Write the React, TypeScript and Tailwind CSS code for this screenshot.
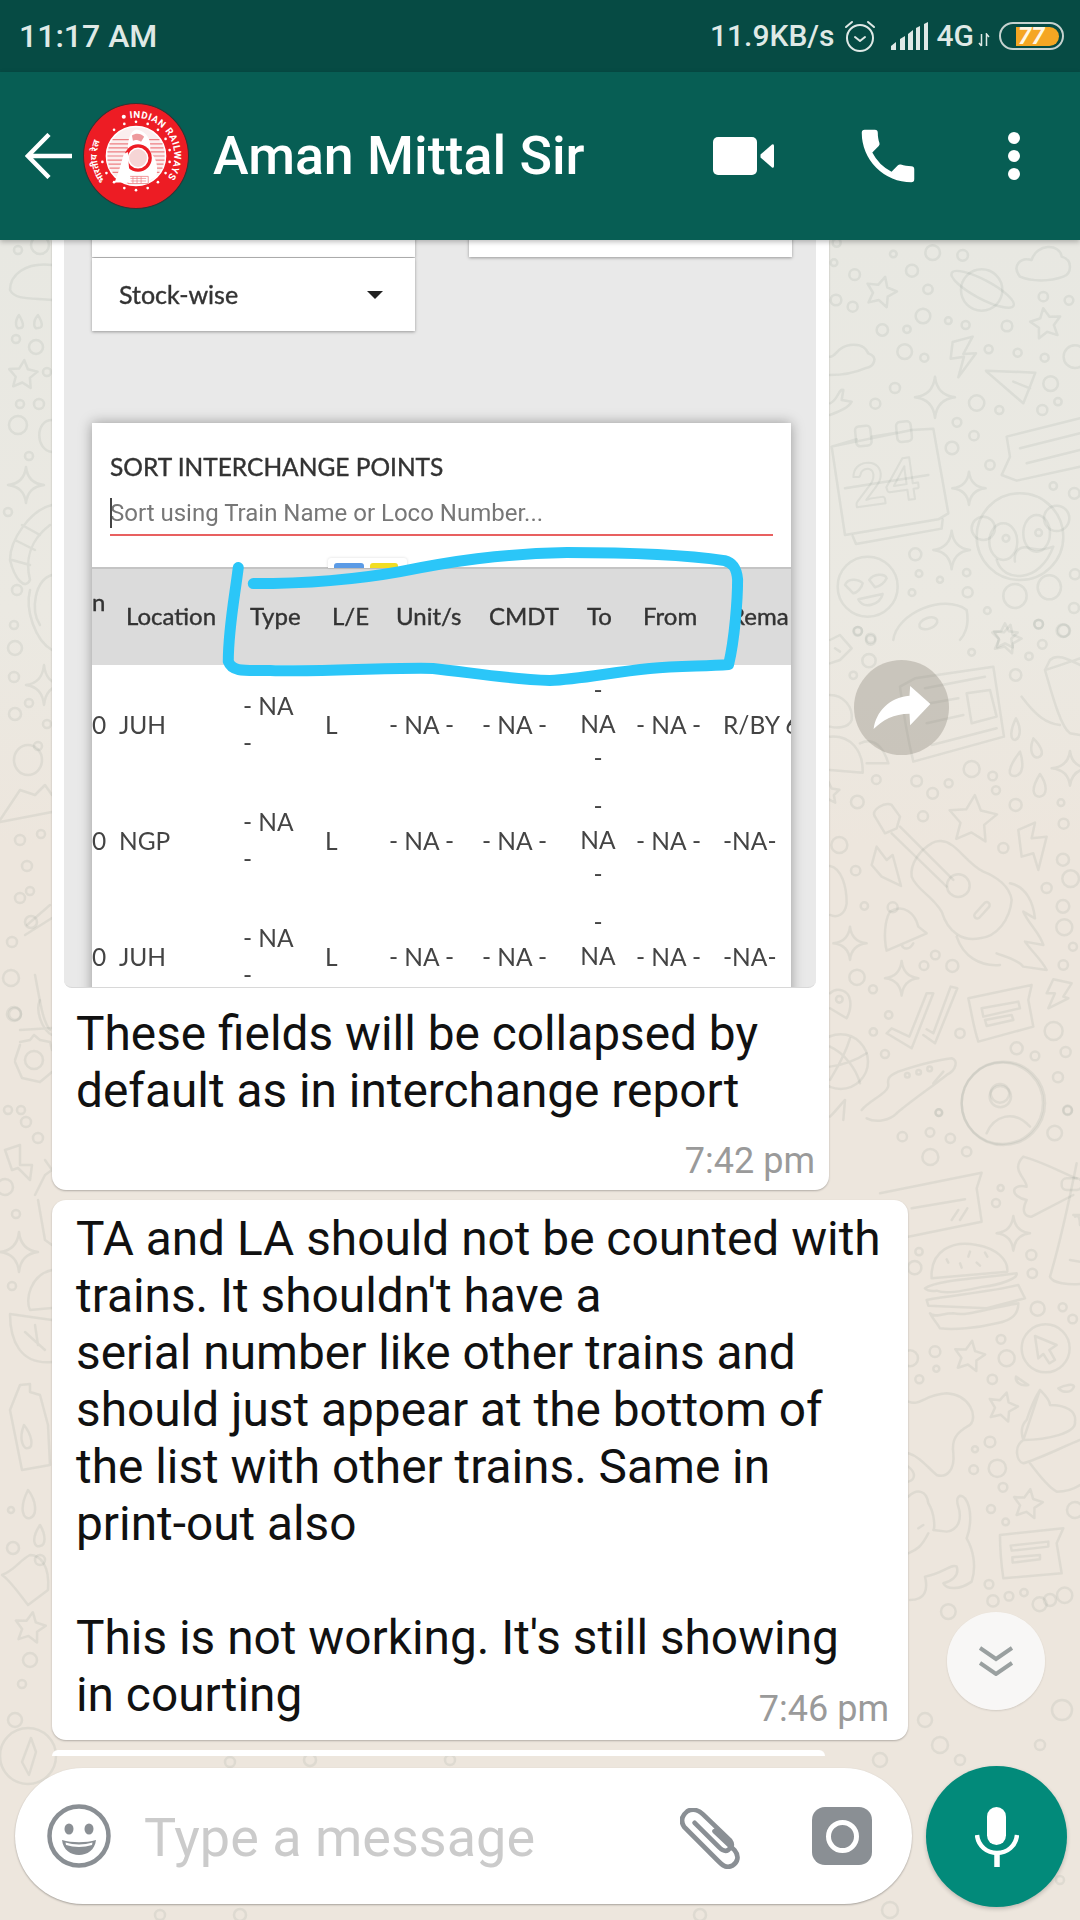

import React from "react";

const star = (cx: number, cy: number, R: number, rot = 0) => {
  const p: string[] = [];
  for (let i = 0; i < 10; i++) {
    const r = i % 2 ? R * 0.5 : R;
    const a = ((-90 + rot + i * 36) * Math.PI) / 180;
    p.push(`${(cx + r * Math.cos(a)).toFixed(1)},${(cy + r * Math.sin(a)).toFixed(1)}`);
  }
  return p.join(" ");
};
const sparkle = (x: number, y: number, a: number, b: number) =>
  `M${x} ${y - b}Q${x + a * 0.1} ${y - b * 0.1} ${x + a} ${y}Q${x + a * 0.1} ${y + b * 0.1} ${x} ${y + b}Q${x - a * 0.1} ${y + b * 0.1} ${x - a} ${y}Q${x - a * 0.1} ${y - b * 0.1} ${x} ${y - b}Z`;

const Dots = ({ d }: { d: number[][] }) => (
  <>
    {d.map(([x, y, r], i) => (
      <circle key={i} cx={x} cy={y} r={r} />
    ))}
  </>
);

const z8 = [[110,8,12],[280,42,10],[398,38,22],[488,46,16],[102,68,10],[164,104,16],[336,92,18],[384,148,14],[108,180,16],[158,200,15],[730,170,14],[807,181,13],[369,228,22],[445,242,10],[497,255,12],[621,258,16],[247,270,17],[321,268,11],[314,335,22],[373,353,12],[566,328,12],[653,338,12],[734,353,12],[825,350,34],[285,444,15],[226,491,15],[530,489,23],[598,510,12],[752,431,22],[774,485,11],[727,510,15],[471,547,13],[522,587,14],[456,624,19],[570,675,14],[760,738,11],[823,760,16],[346,943,18],[357,1001,10],[420,1019,9],[500,998,11],[336,1058,10],[503,1057,15],[562,1112,10],[822,1104,15],[716,1153,13],[789,1172,19],[173,1174,13],[212,1195,14],[825,1003,15]];
const z9 = [[114,33,12],[152,60,14],[147,122,20],[100,166,11],[455,97,10],[732,32,18],[656,12,13],[667,73,13],[627,109,11],[587,165,17],[455,447,24],[518,468,13],[386,490,12],[528,511,12],[290,483,16],[338,520,16],[169,479,13],[112,546,19],[309,589,15],[587,555,18],[723,548,10],[731,611,15],[550,684,15],[729,719,18],[752,776,25],[680,804,15],[729,859,19],[733,922,24],[759,980,12],[730,1035,14],[58,675,24],[107,752,14],[133,858,11],[111,1072,23],[159,1108,12],[312,1037,13],[346,1005,13],[397,1038,18],[206,1185,11],[160,1236,11],[195,1302,12],[420,1240,14],[701,1233,27],[590,1285,18],[645,1308,13],[737,1296,15],[714,1372,15],[356,1478,10],[743,1470,13]];
const z10 = [[177,38,10],[563,32,13],[67,110,14],[150,97,13],[211,115,14],[260,155,14],[151,171,24],[524,99,22],[362,264,9],[348,309,12],[454,465,15],[457,520,14],[117,455,11],[104,503,20],[473,626,21],[548,622,12],[578,657,13],[363,718,13],[380,775,24],[165,755,16],[169,806,9],[118,838,12],[337,838,14],[330,1026,16],[285,1048,9],[281,1109,13],[352,1105,26],[369,1162,13],[333,1227,12],[377,1266,10],[585,1230,24],[327,1453,13],[339,1503,17],[387,1489,13],[432,1478,11],[479,1513,21],[554,1486,23],[205,1535,22],[90,775,24]];
const left = [[18,250,4],[40,245,9],[16,339,4],[36,347,7],[47,372,4],[20,404,4],[39,404,5],[18,425,9],[29,456,4],[8,512,4],[17,590,5],[14,625,4],[15,648,7],[14,677,5],[29,703,4],[15,714,6],[38,746,4],[47,724,4],[20,840,5],[41,834,4],[27,866,5],[30,891,4],[20,898,5],[31,922,6],[12,942,5],[11,978,8],[14,1014,7],[15,1014,6],[21,1110,4],[26,1122,5],[8,1110,4],[38,1138,5],[5,1187,8],[16,1214,4],[12,1286,4],[11,1510,3],[13,1548,6],[30,1660,7],[22,1684,4]];
const bottom = [[700,1915,6],[880,1760,7],[940,1745,8],[960,1760,5],[890,1910,8],[1060,1880,4],[1050,1600,6],[1040,1745,5],[925,1720,7],[1062,1710,10],[160,1915,5],[240,1915,6],[310,1760,6],[230,1762,5],[450,1760,5]];

function Wallpaper() {
  return (
    <svg className="absolute inset-0 h-full w-full" viewBox="0 240 1080 1680" fill="none" stroke="#66776f" strokeOpacity="0.1" strokeWidth="2.5" strokeLinejoin="round" strokeLinecap="round">
      <g transform="translate(800 240) scale(.3333)" strokeWidth="7.5">
        <Dots d={z8} />
        <polygon points={star(243, 157, 48, 15)} />
        <polygon points={star(738, 252, 48, -10)} />
        <polygon points={star(615, 1190, 40, 0)} />
        <path d={sparkle(405, 472, 60, 62)} />
        <path d={sparkle(507, 745, 50, 50)} />
        <path d={sparkle(455, 930, 55, 58)} />
        <circle cx="545" cy="150" r="62" />
        <ellipse cx="548" cy="148" rx="105" ry="28" transform="rotate(28 548 148)" />
        <path d="M660 110C635 80 660 50 695 60C710 10 780 10 785 50C820 60 815 100 790 110C750 125 695 125 660 110Z" />
        <path d="M90 350C110 350 110 320 150 315C190 310 200 330 205 340C235 350 225 380 195 385C160 400 120 405 90 405" />
        <path d="M90 490C115 480 115 445 130 450L125 480L155 485C145 505 115 515 90 525" />
        <path d="M518 290L458 306L452 356L492 350L475 412L528 340L490 342Z" />
        <path d="M558 392L706 398L688 445L670 490L560 395M640 425L690 445" />
        <path d="M95 620L170 598M215 590L290 578M335 570L400 566L445 820L415 838L135 885L95 620ZM135 745L385 705" />
        <rect x="167" y="558" width="46" height="60" rx="12" transform="rotate(-6 190 588)" />
        <rect x="290" y="545" width="44" height="60" rx="12" transform="rotate(-6 312 575)" />
        <path d="M158 888L168 912L425 866L428 838" />
        <text x="155" y="790" fontFamily="Lato, sans-serif" fontSize="175" fontWeight="700" strokeWidth="6" transform="rotate(-8 250 730)">24</text>
        <path d="M840 535L620 590L630 650L605 705L650 722L840 680M660 625L840 580M680 670L840 630" />
        <circle cx="660" cy="890" r="130" />
        <circle cx="550" cy="865" r="35" />
        <circle cx="770" cy="835" r="38" />
        <ellipse cx="610" cy="905" rx="42" ry="55" />
        <ellipse cx="710" cy="880" rx="40" ry="55" />
        <circle cx="618" cy="895" r="10" />
        <circle cx="716" cy="878" r="10" />
        <path d="M590 960C610 1030 720 1030 760 920C735 930 710 930 690 925C665 915 640 930 645 965" />
        <ellipse cx="645" cy="1068" rx="35" ry="36" />
        <ellipse cx="748" cy="1042" rx="35" ry="36" />
        <circle cx="203" cy="1040" r="90" />
        <path d="M135 1035C145 1010 180 1020 188 1030C185 1045 170 1060 160 1060ZM208 1020C220 1000 255 1000 260 1015C250 1035 235 1040 225 1042ZM175 1078L248 1062C240 1095 190 1110 175 1078Z" />
        <path d="M280 1200C290 1120 430 1060 500 1110C510 1160 490 1190 480 1200" />
        <ellipse cx="385" cy="1150" rx="28" ry="16" transform="rotate(-20 385 1150)" />
      </g>

      <g transform="translate(820 620) scale(.3333)" strokeWidth="7.5">
        <Dots d={z9} />
        <polygon points={star(458, 600, 75, 5)} />
        <polygon points={star(560, 58, 45, 15)} />
        <polygon points={star(25, 520, 35, 0)} />
        <path d="M595 630L645 608L635 655L680 650L655 750L640 700L605 710Z" />
        <path d="M155 735L170 680L200 720L218 705L243 798L185 770Z" />
        <path d="M700 1078L755 1090L730 1130L745 1135L685 1165L705 1120L680 1120Z" />
        <path d={sparkle(90, 970, 50, 50)} />
        <path d={sparkle(245, 1075, 50, 52)} />
        <path d={sparkle(750, 445, 55, 52)} />
        <path d="M588 295C570 330 570 360 585 360C602 355 605 325 588 295ZM600 395C565 440 560 470 585 468C610 465 612 430 600 395ZM640 355C625 395 640 415 655 412C675 405 665 380 640 355ZM660 462C630 510 640 530 660 530C685 525 680 490 660 462Z" />
        <path d="M165 590C150 570 195 545 215 555L240 590L230 625L195 640ZM240 620L400 780M215 640L380 800" />
        <path d="M335 670C300 690 270 730 275 770C290 810 335 825 365 875C385 940 430 965 480 955C530 950 570 900 575 840C570 800 530 770 490 755C450 735 420 690 395 675C375 660 350 660 335 670Z" />
        <circle cx="415" cy="797" r="34" />
        <rect x="456" y="862" width="60" height="18" rx="9" transform="rotate(-48 486 871)" />
        <path d="M570 790C620 800 640 850 645 895L610 875C625 910 660 940 670 975L615 965C640 1000 665 1020 680 1050L610 1040C595 1020 555 1010 530 1000M410 950C430 1010 480 1040 540 1035" />
        <path d="M210 875C250 850 285 880 295 920L320 940L200 992C190 950 195 900 210 875ZM245 975C250 990 270 990 280 970" />
        <circle cx="218" cy="862" r="15" />
        <path d="M30 1120C50 1100 85 1110 90 1140C95 1165 85 1185 80 1195L30 1165" />
        <circle cx="58" cy="1138" r="10" />
        <path d="M30 680M30 738C65 745 80 800 80 850C75 885 50 895 30 885" />
        <path d="M200 1240L275 1285L340 1120L320 1120L268 1250L215 1225ZM310 1245L345 1270L412 1105L392 1100L340 1240L320 1228" />
        <path d="M445 1135L635 1095L625 1140L640 1220L475 1265C460 1220 455 1180 445 1135ZM485 1165L595 1145L600 1165L490 1190ZM495 1200L575 1185L580 1200L500 1218Z" />
        <circle cx="62" cy="1325" r="82" />
        <path d="M30 1280C75 1300 110 1350 120 1390M90 1255C70 1320 40 1360 30 1380M30 1340C70 1335 110 1320 140 1300" />
        <path d="M125 1470C150 1440 205 1420 205 1395C200 1370 215 1365 235 1355C280 1340 350 1320 395 1315C415 1320 410 1350 380 1365C330 1405 270 1445 230 1480C210 1500 170 1510 140 1495M340 1390L370 1355" />
        <circle cx="262" cy="1366" r="7" />
        <circle cx="296" cy="1357" r="7" />
        <circle cx="329" cy="1347" r="7" />
        <circle cx="547" cy="1450" r="122" />
        <circle cx="541" cy="1430" r="32" />
        <path d="M30 1490C50 1470 65 1450 75 1440L70 1500" />
        <path d="M780 135C740 115 710 100 690 120L675 150C690 200 720 320 750 340L780 345M675 150C710 140 750 125 780 115M605 230C650 290 680 310 720 315" />
        <path d="M285 175L520 140L552 350L280 425C262 350 250 280 240 200ZM315 205L495 170M330 250L415 235M320 310L430 285M335 375L530 325M440 220L510 210L530 290L455 310Z" />
        <path d="M30 350C90 345 130 390 128 458L30 450M120 370C160 350 190 380 205 430L140 430" />
        <path d="M30 225C70 225 100 260 95 300C85 325 50 325 30 320" />
        <path d="M30 60L60 45L95 85L60 120L30 130M45 85L60 95" />
      </g>

      <g transform="translate(880 1100) scale(.3333)" strokeWidth="7.5">
        <Dots d={z10} />
        <polygon points={star(268, 770, 48, 10)} />
        <polygon points={star(368, 922, 46, 15)} />
        <polygon points={star(443, 1213, 46, 10)} />
        <path d={sparkle(400, 400, 50, 52)} />
        <circle cx="370" cy="10" r="125" />
        <path d="M320 100C340 50 400 25 450 80" />
        <circle cx="360" cy="-20" r="28" />
        <path d="M155 535C150 450 220 420 290 435C350 445 385 480 382 515ZM135 565C170 540 300 535 410 520C415 535 360 555 310 560C260 570 200 585 170 572C150 575 140 570 135 565ZM140 600C220 585 340 575 415 555L435 595L320 625L145 617ZM150 640C160 655 185 640 220 640C260 650 320 625 415 610C415 640 400 660 350 670C290 685 220 690 180 685C165 660 160 660 150 640Z" />
        <path d="M270 455L265 470M200 478L205 488M240 490L245 503M290 488L300 497M315 458L322 470" />
        <circle cx="497" cy="745" r="72" />
        <path d="M465 708L530 735L508 750L525 780L508 790L490 762L475 775Z" />
        <path d="M408 830L445 855C420 860 405 845 408 830ZM535 865C555 855 580 850 582 860C575 880 550 880 535 865Z" />
        <path d="M480 870C500 890 510 905 510 915C560 915 590 935 585 965C590 1000 500 1020 430 1020C400 1040 410 1085 430 1090C470 1080 550 1040 600 1020M430 1020C420 990 430 970 440 960C450 930 460 900 480 870ZM450 1090C480 1130 510 1165 530 1175C560 1175 585 1165 600 1155" />
        <path d="M430 170C500 190 570 230 590 235M430 170C390 210 440 235 440 260C390 250 390 290 440 300C420 340 440 350 455 350L580 285" />
        <rect x="545" y="235" width="60" height="35" rx="15" />
        <path d="M590 190C570 290 540 430 510 530C515 550 570 555 600 552M580 345L600 345M570 480L600 485M585 350C600 340 600 370 600 375" />
        <path d="M0 280L305 218L290 265L305 365L85 410M95 325L255 298M215 360L235 330M240 360L262 325" />
        <path d="M360 1305L550 1285L530 1330L545 1420L370 1435C365 1400 360 1350 360 1305ZM392 1337L505 1325V1340L395 1352ZM397 1372L480 1365V1378L398 1388Z" />
        <path d="M85 905C120 920 130 885 200 880C270 885 295 950 270 975C225 1000 215 1020 220 1060C225 1110 200 1135 170 1125C140 1100 120 1070 85 1060" />
        <path d="M85 1190C110 1165 140 1170 145 1210C165 1240 165 1290 160 1290L200 1295C240 1290 245 1250 235 1220C225 1190 240 1180 255 1195C280 1230 270 1290 260 1315C280 1350 290 1400 275 1445C240 1470 200 1470 190 1450C210 1445 240 1430 230 1400C215 1390 190 1420 135 1430C145 1470 135 1500 90 1500" />
        <path d="M115 1285L130 1275M85 1360C110 1350 125 1340 145 1300" />
        <path d="M85 1100C110 1120 105 1140 85 1145" />
      </g>

      <Dots d={left} />
      <Dots d={bottom} />
      <path d="M52 265C25 262 10 275 10 290C15 300 30 298 52 300" />
      <path d="M19 315C14 322 16 330 20 328C25 328 23 322 19 315ZM38 315C32 322 34 330 38 328C44 328 42 322 38 315Z" />
      <polygon points={star(23, 375, 15, 5)} />
      <path d="M52 420C35 420 35 450 52 452" />
      <path d={sparkle(26, 485, 18, 18)} />
      <path d={sparkle(44, 685, 18, 20)} />
      <path d="M52 505C30 510 10 540 10 560C15 580 25 590 30 580C25 560 30 540 50 525M15 540L35 550M12 560L30 565M22 525L40 535" />
      <path d="M30 590C25 610 35 640 52 650M52 575C35 580 30 610 40 625" />
      <ellipse cx="28" cy="760" rx="14" ry="15" />
      <path d="M0 820L20 790L35 795L45 785L52 795M0 822L52 812" />
      <path d="M27 925L50 905M25 935L52 918" />
      <path d="M35 975C40 1000 42 1020 50 1030" />
      <path d="M20 1030L52 1028M40 1000C35 1010 42 1030 52 1035" />
      <circle cx="34" cy="1060" r="9" />
      <path d="M20 1042L30 1040L34 1035L40 1040L50 1042L52 1050M15 1060L20 1045M15 1062L22 1078L40 1082L52 1072" />
      <path d="M5 1150L20 1145L20 1165L32 1165L30 1180L18 1168L12 1170Z" />
      <path d="M45 1160L52 1170M35 1195L45 1175L52 1170M38 1200L45 1240L52 1245" />
      <path d={sparkle(19, 1252, 19, 20)} />
      <path d="M52 1270C30 1275 25 1300 30 1310L52 1308" />
      <path d="M10 1314L52 1320M10 1314C10 1340 20 1365 52 1362M25 1332L45 1350M35 1325L38 1345" />
      <path d="M20 1385L30 1384V1392L40 1395L48 1425L50 1465L22 1470L10 1410Z" />
      <path d="M24 1425C18 1440 24 1450 28 1448C34 1448 32 1435 24 1425Z" />
      <path d="M28 1490C18 1510 24 1520 30 1518C38 1515 36 1500 28 1490ZM40 1525C30 1540 35 1548 40 1546C46 1545 46 1535 40 1525Z" />
      <path d="M2 1575C15 1570 20 1560 30 1555C40 1555 50 1565 48 1590L28 1605C20 1595 10 1580 2 1575Z" />
      <circle cx="40" cy="1560" r="5" />
      <polygon points={star(30, 1628, 16, 10)} />
      <circle cx="28" cy="1756" r="28" />
      <circle cx="15" cy="1720" r="7" />
      <path d="M31 1738L22 1762L29 1775L36 1752Z" />
    </svg>
  );
}

function Logo() {
  const dots = [] as number[][];
  for (let a = 100; a <= 260; a += 20) {
    const t = (a * Math.PI) / 180;
    dots.push([52 + 33.5 * Math.sin(t), 52 - 33.5 * Math.cos(t)]);
  }
  for (let a = -40; a <= 80; a += 20) {
    const t = (a * Math.PI) / 180;
    dots.push([52 + 33.5 * Math.sin(t), 52 - 33.5 * Math.cos(t)]);
  }
  return (
    <svg viewBox="0 0 104 104" className="h-[106px] w-[106px] shrink-0">
      <circle cx="52" cy="52" r="51.5" fill="#ed1c24" stroke="#333" strokeWidth="1" />
      <path id="rl-en" d="M14.5 52A37.5 37.5 0 1 1 52 89.5" fill="none" />
      <path id="rl-hi" d="M24 78A38 38 0 0 1 36 17.5" fill="none" />
      <text fill="#fff" fontSize="9.5" fontWeight="700" fontFamily="Roboto, sans-serif" letterSpacing="0.55">
        <textPath href="#rl-en" startOffset="30%">INDIAN RAILWAYS</textPath>
      </text>
      <text fill="#fff" fontSize="9" fontWeight="700" fontFamily="'Noto Sans', sans-serif">
        <textPath href="#rl-hi" startOffset="4%">भारतीय रेल</textPath>
      </text>
      <g fill="#fff">
        {dots.map(([x, y], i) => (
          <circle key={i} cx={x} cy={y} r="1.3" />
        ))}
        <circle cx="40" cy="13.5" r="2" />
      </g>
      <circle cx="52" cy="52" r="29" fill="#fbeeee" stroke="#fff" strokeWidth="1.5" />
      <g stroke="#ee7f83" strokeWidth="1.2">
        <path d="M29 36H75M26 40H78M25 44H79M24 48H80M24 52H80M24 56H80M25 60H79M26 64H78M29 68H75" />
      </g>
      <path d="M52 26C60 27 66 33 66 42V48C72 54 74 62 72 72L62 78H44V46C44 36 46 28 52 26Z" fill="#fff" />
      <path d="M44 72H64V79H44Z" fill="#fff" stroke="#ee7f83" strokeWidth="0.8" />
      <path d="M46 74H62M46 76.5H62M49 72V79M53 72V79M57 72V79" stroke="#ee7f83" strokeWidth="0.7" />
      <circle cx="54" cy="54" r="13.5" fill="#ed1c24" />
      <circle cx="54" cy="54" r="9.5" fill="#f6d5d5" stroke="#fff" strokeWidth="1.5" />
      <path d="M48 32C52 29 57 30 60 33L57 38C54 36 51 36 49 37Z" fill="#ee9a9d" />
      <path d="M31 78L36 64L40 50L44 48L45 62L47 78Z" fill="#fff" />
    </svg>
  );
}

function StatusIcons() {
  return (
    <div className="flex items-center text-[#dfe9e6]">
      <span className="text-[30px] font-medium leading-none">11.9KB/s</span>
      <svg viewBox="0 0 34 34" className="ml-[8px] h-[34px] w-[34px]" fill="none" stroke="currentColor" strokeWidth="2" strokeLinecap="round" strokeLinejoin="round">
        <circle cx="17" cy="19" r="13" />
        <path d="M12 18l5 4 5-4M3 8l6-5M31 8l-6-5" />
      </svg>
      <svg viewBox="0 0 38 28" className="ml-[14px] h-[28px] w-[38px]" fill="currentColor">
        <path d="M0 28V24L5 20V28ZM9 28V17L14 14V28ZM17 28V12L22 8V28ZM25 28V6L29 4V28ZM33 28V2L37 0V28Z" />
      </svg>
      <span className="ml-[8px] text-[30px] font-medium leading-none">4G</span>
      <svg viewBox="0 0 12 14" className="ml-[4px] mt-[8px] h-[14px] w-[12px]" fill="none" stroke="currentColor" strokeWidth="1.5">
        <path d="M3.5 1V13M1 10l2.5 3M8.5 13V1L11 4" />
      </svg>
      <div className="ml-[9px] flex h-[28px] w-[65px] items-center rounded-full border-[2.5px] border-[#c5d2cf]">
        <div className="ml-[15px] flex h-[19px] w-[43px] items-center rounded-r-full bg-[#f5a623] pl-[2px] text-[24px] font-bold italic leading-none text-[#fff7e6]">77</div>
      </div>
    </div>
  );
}

const COLS = "grid grid-cols-[27px_124px_82px_64px_93px_98px_56px_87px_80px]";

function Row({ loc, last }: { loc: string; last: string }) {
  return (
    <div className={`${COLS} h-[116px] items-center whitespace-pre-line text-[24.5px] leading-[35px] text-[#444] [font-family:Lato,sans-serif]`}>
      <div className="pr-[18px] text-right">0</div>
      <div>{loc}</div>
      <div className="leading-[37px]">{"- NA\n-"}</div>
      <div>L</div>
      <div>- NA -</div>
      <div>- NA -</div>
      <div className="text-center leading-[34px] -translate-x-[10px]">{"-\nNA\n-"}</div>
      <div>- NA -</div>
      <div className="whitespace-nowrap">{last}</div>
    </div>
  );
}

function ScreenshotImage() {
  return (
    <div className="relative h-[748px] w-[752px] overflow-hidden rounded-b-[8px] border-b border-[#d8d8d8] bg-[#e9e9e9] blur-[0.4px]">
      <div className="mt-[-20px] flex px-[28px]">
        <div className="flex w-[323px] shrink-0 flex-col gap-[1px]">
          <div className="h-[37px] bg-white shadow-[0_1px_3px_rgba(0,0,0,0.35)]" />
          <div className="flex h-[73px] items-center justify-between bg-white pl-[27px] pr-[32px] text-[25px] text-[#333] shadow-[0_1px_3px_rgba(0,0,0,0.35)] [font-family:Lato,sans-serif] [-webkit-text-stroke:0.4px_#333]">
            <span>Stock-wise</span>
            <span className="h-0 w-0 border-x-[8px] border-t-[8px] border-x-transparent border-t-[#222]" />
          </div>
        </div>
        <div className="ml-[54px] h-[37px] w-[323px] shrink-0 bg-white shadow-[0_1px_3px_rgba(0,0,0,0.35)]" />
      </div>
      <div className="relative ml-[28px] mt-[92px] w-[699px] bg-white shadow-[0_0_12px_rgba(0,0,0,0.35)]">
        <div className="h-[144px] px-[18px] pt-[28px]">
          <div className="text-[24.5px] leading-[32px] text-[#333] [font-family:Lato,sans-serif] [-webkit-text-stroke:0.4px_#333]">SORT INTERCHANGE POINTS</div>
          <div className="relative mt-[15px] h-[38px] w-[663px] border-b-[2.5px] border-[#e86060] text-[24px] leading-[30px] text-[#777] [font-family:Roboto,sans-serif]">
            <span className="absolute left-0 top-0 h-[30px] w-[2px] bg-[#444]" />
            Sort using Train Name or Loco Number...
          </div>
        </div>
        <div className="absolute left-[236px] top-[135px] flex h-[10px] w-[79px] gap-[6px] rounded-t-[3px] bg-white px-[6px] pt-[5px] shadow-[0_0_3px_rgba(0,0,0,0.15)]">
          <span className="h-[5px] w-[30px] rounded-t-[3px] bg-[#5b9be6]" />
          <span className="h-[5px] w-[28px] rounded-t-[3px] bg-[#f2dd22]" />
        </div>
        <div className={`${COLS} h-[98px] items-center overflow-hidden whitespace-nowrap border-t-[2px] border-[#c4c4c4] bg-[#dbdbdb] pb-[4px] text-[24px] text-[#333] [font-family:Lato,sans-serif] [-webkit-text-stroke:0.4px_#333]`}>
          <div className="mt-[-28px] pr-[31px] text-right">n</div>
          <div className="pl-[7px]">Location</div>
          <div className="pl-[7px]">Type</div>
          <div className="pl-[7px]">L/E</div>
          <div className="pl-[7px]">Unit/s</div>
          <div className="pl-[7px]">CMDT</div>
          <div className="pl-[7px]">To</div>
          <div className="pl-[7px]">From</div>
          <div className="pl-[7px]">Rema</div>
        </div>
        <div className="h-[340px] overflow-hidden pt-[1px]">
          <Row loc="JUH" last="R/BY 6" />
          <Row loc="NGP" last="-NA-" />
          <Row loc="JUH" last="-NA-" />
        </div>
      </div>
      <svg viewBox="64 240 752 748" className="absolute inset-0 h-full w-full" fill="none" stroke="#2bc6f8" strokeWidth="11" strokeLinecap="round" strokeLinejoin="round">
        <path d="M238 568C234 600 228 630 228 662C232 673 245 671 270 671C320 673 380 668 433 669C470 673 510 680 550 681C580 680 610 673 650 669C680 666 705 667 729 665C735 640 738 600 738 580C737 568 733 563 725 561C690 556 630 553 567 553C500 554 450 562 400 572C350 581 300 584 253 584" />
      </svg>
    </div>
  );
}

function Time({ t }: { t: string }) {
  return <span className="whitespace-nowrap text-[36px] leading-none text-[#9a9a9a]">{t}</span>;
}

export default function App() {
  return (
    <div className="relative flex h-[1920px] w-[1080px] flex-col overflow-hidden [font-family:Roboto,sans-serif]">
      <div className="flex h-[72px] items-center justify-between bg-[#064b44] pl-[19px] pr-[16px]">
        <span className="text-[32px] font-medium leading-none text-[#dfe9e6]">11:17 AM</span>
        <StatusIcons />
      </div>
      <header className="relative z-10 flex h-[168px] items-center bg-[#075e54] pl-[25px] shadow-[0_2px_5px_rgba(0,0,0,0.25)]">
        <svg viewBox="0 0 47 46" className="h-[46px] w-[47px] shrink-0" fill="none" stroke="#fff" strokeWidth="4.5">
          <path d="M47 23H3M24 1.5L2.8 23L24 44.5" />
        </svg>
        <div className="ml-[11px]"><Logo /></div>
        <span className="ml-[24px] whitespace-nowrap text-[53.7px] font-medium leading-none text-white">Aman Mittal Sir</span>
        <svg viewBox="0 0 61 38" className="absolute left-[713px] top-[65px] h-[38px] w-[61px]" fill="#fff">
          <rect width="44" height="38" rx="5" />
          <path d="M47.5 17.5L59 7.5Q61 6.5 61 9V29Q61 31.5 59 30.5L47.5 20.5Z" />
        </svg>
        <svg viewBox="0 0 24 24" className="absolute left-[853px] top-[49px] h-[70px] w-[70px]" fill="#fff">
          <path d="M6.62 10.79a15.05 15.05 0 0 0 6.59 6.59l2.2-2.2a1 1 0 0 1 1.02-.24c1.12.37 2.33.57 3.57.57a1 1 0 0 1 1 1V20a1 1 0 0 1-1 1A17 17 0 0 1 3 4a1 1 0 0 1 1-1h3.5a1 1 0 0 1 1 1c0 1.25.2 2.45.57 3.57a1 1 0 0 1-.25 1.02l-2.2 2.2z" />
        </svg>
        <div className="absolute left-[1008px] top-[60px] flex flex-col gap-[6px]">
          <span className="h-[12px] w-[12px] rounded-full bg-white" />
          <span className="h-[12px] w-[12px] rounded-full bg-white" />
          <span className="h-[12px] w-[12px] rounded-full bg-white" />
        </div>
      </header>

      <main className="relative flex-1 overflow-hidden bg-[linear-gradient(180deg,#e8e8e2_0%,#ebe9e2_22%,#ede6dd_36%,#ede6dd_100%)]">
        <Wallpaper />
        <div className="relative flex h-full flex-col justify-end gap-[10px] pb-[164px] pl-[52px] text-[47.8px] leading-[57px] text-[#111]">
          <div className="w-[777px] shrink-0 rounded-[14px] rounded-t-none bg-white shadow-[0_1px_2px_rgba(0,0,0,0.25)]">
            <div className="pl-[12px]"><ScreenshotImage /></div>
            <div className="h-[202px] pl-[24px] pr-[14px] pt-[18px]">
              <div>These fields will be collapsed by</div>
              <div>default as in interchange report</div>
              <div className="mt-[14px] text-right leading-none"><Time t="7:42 pm" /></div>
            </div>
          </div>
          <div className="h-[540px] w-[856px] shrink-0 rounded-[14px] bg-white pl-[24px] pr-[19px] pt-[11px] shadow-[0_1px_2px_rgba(0,0,0,0.25)]">
            <div>TA and LA should not be counted with</div>
            <div>trains. It shouldn't have a</div>
            <div>serial number like other trains and</div>
            <div>should just appear at the bottom of</div>
            <div>the list with other trains. Same in</div>
            <div>print-out also</div>
            <div className="h-[57px]" />
            <div>This is not working. It's still showing</div>
            <div className="flex items-end justify-between">
              <span>in courting</span>
              <span className="mb-[-6px] leading-none"><Time t="7:46 pm" /></span>
            </div>
          </div>
          <div className="h-[6px] w-[773px] shrink-0 rounded-t-[14px] bg-white" />
        </div>

        <div className="absolute left-[854px] top-[420px] flex h-[95px] w-[95px] items-center justify-center rounded-full bg-[#8a8478]/35">
          <svg viewBox="150 185 190 145" className="h-[48px] w-[62px]" fill="#fff">
            <path d="M270 190L332 245L270 310L268 275C220 275 185 295 158 322C165 270 205 225 268 220Z" />
          </svg>
        </div>
        <div className="absolute left-[947px] top-[1372px] flex h-[98px] w-[98px] items-center justify-center rounded-full bg-[#f9f8f7]/95 shadow-[0_1px_2px_rgba(0,0,0,0.12)]">
          <svg viewBox="0 0 34 30" className="h-[30px] w-[34px]" fill="none" stroke="#9aa0a0" strokeWidth="4">
            <path d="M1 2L17 13L33 2M1 17L17 28L33 17" />
          </svg>
        </div>

        <div className="absolute left-[15px] top-[1528px] flex h-[136px] w-[897px] items-center rounded-[68px] bg-white pl-[32px] shadow-[0_1px_2px_rgba(0,0,0,0.3)]">
          <svg viewBox="0 0 64 64" className="h-[64px] w-[64px] shrink-0" fill="none">
            <circle cx="32" cy="32" r="29.5" stroke="#8a8f94" strokeWidth="4.5" />
            <ellipse cx="22" cy="25" rx="4.5" ry="5.5" fill="#8a8f94" />
            <ellipse cx="42" cy="25" rx="4.5" ry="5.5" fill="#8a8f94" />
            <path d="M15 36C25 39 39 39 49 36C48 46 40 51 32 51C24 51 16 46 15 36Z" fill="#8a8f94" />
            <path d="M18.5 38.5C27 41 37 41 45.5 38.5L45 41C37 43.5 27 43.5 19 41Z" fill="#fff" />
          </svg>
          <span className="ml-[33px] mt-[4px] whitespace-nowrap text-[54px] leading-none text-[#cbcbcb]">Type a message</span>
          <svg viewBox="0 0 64 58" className="absolute left-[665px] top-[40px] h-[61px] w-[67px]" fill="none" stroke="#8a8f94" strokeWidth="4.5" strokeLinecap="round">
            <path d="M33 22L52 40C57 46 55 52 50 55C44 58 40 54 36 50L4 18C0 12 2 7 7 3C12 0 18 2 22 6L48 31C51 35 49 38 46 40C43 42 40 40 37 37L14 14" />
          </svg>
          <div className="absolute left-[797px] top-[39px] flex h-[58px] w-[60px] items-center justify-center rounded-[13px] bg-[#8a8f94]">
            <span className="h-[33px] w-[33px] rounded-full border-[5px] border-white" />
          </div>
        </div>
        <div className="absolute left-[926px] top-[1526px] flex h-[141px] w-[141px] items-center justify-center rounded-full bg-[#028a7a] shadow-[0_2px_4px_rgba(0,0,0,0.2)]">
          <svg viewBox="0 0 44 60" className="h-[60px] w-[44px]" fill="none">
            <rect x="12" y="0" width="19" height="38" rx="9.5" fill="#fff" />
            <path d="M2 28C3 39 12 46 22 46C32 46 41 39 42 28" stroke="#fff" strokeWidth="4.5" />
            <path d="M22 46V60" stroke="#fff" strokeWidth="5.5" />
          </svg>
        </div>
      </main>
    </div>
  );
}
